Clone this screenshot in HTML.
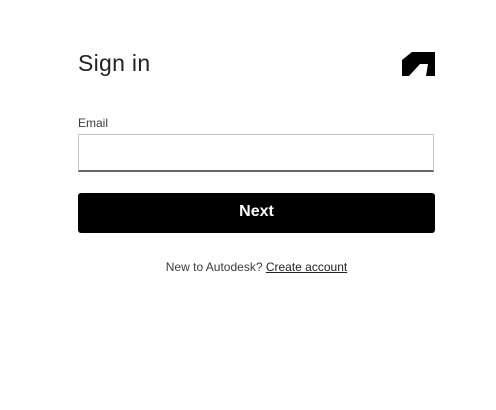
<!DOCTYPE html>
<html><head><style>
body{margin:0;width:496px;height:410px;background:#fff;font-family:"Liberation Sans",sans-serif;position:relative;overflow:hidden}
.t{position:absolute;left:78px;top:50px;font-size:23px;color:#222;letter-spacing:0.3px}
.logo{position:absolute;left:401px;top:52px}
.l{position:absolute;left:78px;top:116px;font-size:12px;color:#3c3c3c}
.in{position:absolute;left:78px;top:134px;width:354px;height:35px;border:1px solid #c4c4c4;border-bottom:2px solid #666}
.btn{position:absolute;left:78px;top:193px;width:357px;height:40px;background:#000;border-radius:3px;color:#fff;font-weight:bold;font-size:16px;text-align:center;line-height:38px}
.f{position:absolute;left:0;width:513px;text-align:center;top:260px;font-size:12px;color:#3c3c3c}
.f u{color:#222}
</style></head><body>
<div class="t">Sign in</div>
<svg class="logo" width="35" height="25" viewBox="0 0 35 25"><polygon points="1,8 11,0 34,0 34,24 25,24 27,12 19,12 8,24 1,24" fill="#000"/></svg>
<div class="l">Email</div>
<div class="in"></div>
<div class="btn">Next</div>
<div class="f">New to Autodesk? <u>Create account</u></div>
</body></html>
